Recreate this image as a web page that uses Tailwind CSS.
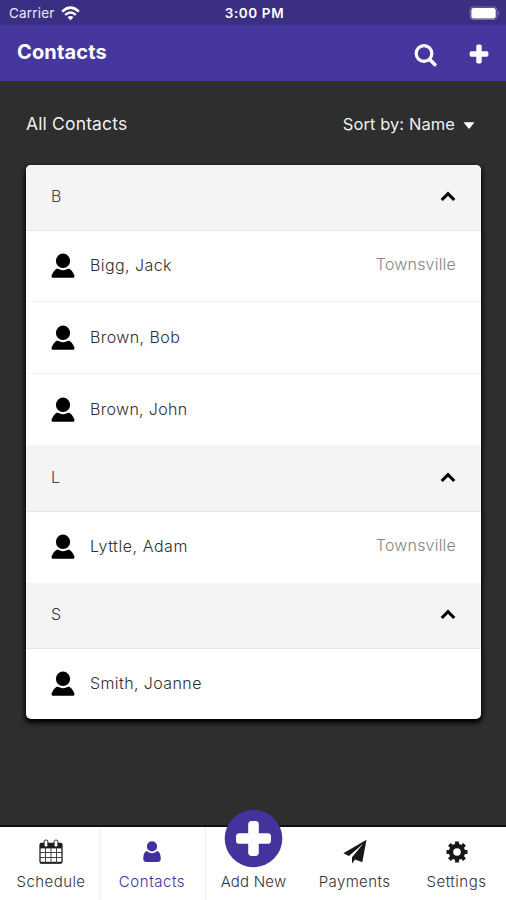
<!DOCTYPE html>
<html lang="en">
<head>
<meta charset="utf-8">
<title>Contacts</title>
<script src="https://cdn.jsdelivr.net/npm/@tailwindcss/browser@4"></script>
</head>
<body class="bg-[#2e2e2e]">
<svg class="hidden">
  <symbol id="person" viewBox="0 0 24 26"><ellipse cx="12" cy="7.8" rx="7.1" ry="7.2"/><path d="M5.5 15.8Q7.5 15.4 8.7 16.4Q12 18 15.3 16.4Q16.5 15.4 18.5 15.8Q22 18 23.4 22.2Q23.8 24.8 21.5 24.8H2.5Q.2 24.8 .6 22.2Q2 18 5.5 15.8Z"/></symbol>
  <symbol id="chevron" viewBox="0 0 16 11"><path d="M1.7 9 8 2.7 14.3 9" fill="none" stroke="currentColor" stroke-width="3.1"/></symbol>
</svg>
<div class="flex h-[900px] w-[506px] flex-col overflow-hidden font-['Inter','Liberation_Sans',sans-serif]">
  <div class="grid h-[25px] shrink-0 grid-cols-3 items-center bg-[#3a2f82] pr-[6px] pl-[9px] text-white">
    <div class="flex items-center gap-[6px]">
      <span class="pt-px text-[13.5px] leading-[25px] tracking-[.2px] text-white/90">Carrier</span>
      <svg class="h-[15px] w-[19px]" viewBox="0 0 19 15" fill="none" stroke="currentColor" stroke-width="2.5"><path d="M1.1 5.6Q9.5-2.3 17.9 5.6M4.2 8.9Q9.5 4.2 14.8 8.9"/><path d="M6.5 11.2Q9.5 8.8 12.5 11.2L9.5 14.3Z" fill="currentColor" stroke="none"/></svg>
    </div>
    <span class="-mr-px -ml-px pt-px text-center text-[13.5px] font-semibold leading-[25px] tracking-[.6px]">3:00 PM</span>
    <svg class="h-[14px] w-[31px] justify-self-end" viewBox="0 0 31 14"><rect x="1" y="1" width="27" height="12.5" rx="3" fill="none" stroke="#7a71ab"/><rect x="2.3" y="2" width="24.4" height="10.5" rx="2" fill="#fff"/><path d="M29 5q2 2.2 0 4.5z" fill="#8c84ba"/></svg>
  </div>
  <header class="flex h-[56px] shrink-0 items-center justify-between bg-[#45379d] pr-[17px] pl-[17px] text-white">
    <h1 class="pb-[2px] text-[20px] font-bold leading-6 tracking-[.15px]">Contacts</h1>
    <div class="flex items-center gap-[32px] pt-[2px]">
      <svg class="mt-[2px] h-[23px] w-[23px]" viewBox="0 0 23 23" fill="none" stroke="currentColor" stroke-linecap="round"><circle cx="10" cy="9.5" r="7.8" stroke-width="3.2"/><path d="M16 15.8 20.8 20.5" stroke-width="3.7"/></svg>
      <svg class="h-5 w-5" viewBox="0 0 20 20" fill="currentColor"><rect x="7.3" y=".6" width="5.4" height="18.8" rx="1.6"/><rect x=".6" y="7.3" width="18.8" height="5.4" rx="1.6"/></svg>
    </div>
  </header>
  <main class="flex flex-1 flex-col px-[26px]">
    <div class="flex h-[84px] items-center justify-between pt-[2px] pr-[5px] text-white">
      <h2 class="text-[17.5px] tracking-[.15px] text-white/95">All Contacts</h2>
      <div class="flex items-center gap-[8px]"><span class="text-[16.5px] tracking-[.08px] text-white/95">Sort by: Name</span><svg class="mt-[2px] h-[7px] w-[12px]" viewBox="0 0 12 7" fill="currentColor"><path d="M.5.3h11L6.5 6.5q-.5.5-1 0z"/></svg></div>
    </div>
    <section class="mr-[-1px] h-[554px] overflow-hidden rounded-[5px] bg-white text-[16px] text-[#303030] shadow-[0_3px_5px_1px_#000]">
      <div class="flex h-[66px] items-center justify-between border-b border-[#e4e4e4] bg-[#f4f4f4] pr-[25px] pl-[25px] font-light"><span class="pb-[3px] text-[#444]">B</span><svg class="mb-[3px] h-[11px] w-[16px] text-black"><use href="#chevron"/></svg></div>
      <div class="flex h-[71px] items-center border-b border-[#f2f2f2] pr-[25px] pl-[25px] font-light"><svg class="h-[26px] w-[24px]"><use href="#person"/></svg><span class="ml-[15px] flex-1 pb-[2px] tracking-[.42px]">Bigg, Jack</span><span class="pb-[5px] tracking-[.2px] text-[#858585]">Townsville</span></div>
      <div class="flex h-[72px] items-center border-b border-[#f2f2f2] pr-[25px] pl-[25px] font-light"><svg class="h-[26px] w-[24px]"><use href="#person"/></svg><span class="ml-[15px] flex-1 pb-[2px] tracking-[.42px]">Brown, Bob</span></div>
      <div class="flex h-[71px] items-center pr-[25px] pl-[25px] font-light"><svg class="h-[26px] w-[24px]"><use href="#person"/></svg><span class="ml-[15px] flex-1 pb-[1px] tracking-[.32px]">Brown, John</span></div>
      <div class="flex h-[67px] items-center justify-between border-b border-[#e4e4e4] bg-[#f4f4f4] pr-[25px] pl-[25px] font-light"><span class="pb-[2px] text-[#444]">L</span><svg class="mb-[2px] h-[11px] w-[16px] text-black"><use href="#chevron"/></svg></div>
      <div class="flex h-[71px] items-center pr-[25px] pl-[25px] font-light"><svg class="mb-px h-[26px] w-[24px]"><use href="#person"/></svg><span class="ml-[15px] flex-1 pb-[3px] tracking-[.55px]">Lyttle, Adam</span><span class="pb-[5px] tracking-[.2px] text-[#858585]">Townsville</span></div>
      <div class="flex h-[66px] items-center justify-between border-b border-[#e4e4e4] bg-[#f4f4f4] pr-[25px] pl-[25px] font-light"><span class="pb-[3px] text-[#333]">S</span><svg class="mb-[2px] h-[11px] w-[16px] text-black"><use href="#chevron"/></svg></div>
      <div class="flex h-[70px] items-center pr-[25px] pl-[25px] font-light"><svg class="h-[26px] w-[24px]"><use href="#person"/></svg><span class="ml-[15px] flex-1 pb-[2px] tracking-[.4px]">Smith, Joanne</span></div>
    </section>
  </main>
  <nav class="relative grid h-[75px] shrink-0 grid-cols-[99px_108px_93px_103px_103px] border-t-2 border-[#111] bg-white text-[15px] font-light text-[#333]">
    <a class="flex flex-col items-center pt-[12px] pl-[3px]"><svg class="h-[25px] w-[24px]" viewBox="0 0 24 25"><rect x="1" y="4.5" width="22" height="19.5" rx="1.4" fill="#fff" stroke="#222" stroke-width="1.3"/><path d="M1 4h22v5.4H1z" fill="#1d1d1d"/><path d="M1 23.6H23" stroke="#1d1d1d" stroke-width="1.6"/><path d="M1 13.5H23M1 18.5H23M6.5 9V24M12 9V24M17.5 9V24" stroke="#444"/><rect x="5.1" y="1" width="3.8" height="7" rx="1.7" fill="#fff" stroke="#222"/><rect x="15.1" y="1" width="3.8" height="7" rx="1.7" fill="#fff" stroke="#222"/></svg><span class="mt-[8px] leading-[20px] tracking-[.45px]">Schedule</span></a>
    <a class="flex flex-col items-center border-x-[3px] border-[#f7f7f7] pt-[13px] pr-[2px] text-[#4030a0]"><svg class="h-6 w-5" viewBox="0 0 20 24" fill="currentColor"><circle cx="10" cy="6.4" r="5.1"/><path d="M5 10.9Q10 15.6 15 10.9Q18.7 11.7 18.7 18.7Q18.7 22 15.5 22H4.5Q1.3 22 1.3 18.7Q1.3 11.7 5 10.9Z"/></svg><span class="mt-[8px] leading-[20px] tracking-[.55px]">Contacts</span></a>
    <a class="flex flex-col items-center pt-[45px]"><svg class="absolute top-[-19px] left-[224px] h-[60px] w-[60px]" viewBox="0 0 60 60"><circle cx="29.5" cy="30.5" r="28.8" fill="#43349d"/><rect x="24.2" y="13" width="10.6" height="35" rx="3.4" fill="#fff"/><rect x="12" y="25.2" width="35" height="10.6" rx="3.4" fill="#fff"/></svg><span class="leading-[20px] tracking-[.2px]">Add New</span></a>
    <a class="flex flex-col items-center pt-[12px] pl-[6px]"><svg class="h-[25px] w-[24px]" viewBox="0 0 24 25" fill="#181818"><path d="M23.5.8.4 14.2 5.9 16.9 20.2 4.8 9 18.2V24.4L12.2 20.5 19.3 23.2Z"/></svg><span class="mt-[8px] leading-[20px] tracking-[.4px]">Payments</span></a>
    <a class="flex flex-col items-center pt-[14px] pl-[4px]"><svg class="h-[22px] w-[22px]" viewBox="0 0 22 22"><circle cx="11" cy="11" r="6" fill="none" stroke="#181818" stroke-width="4.4"/><path d="M11 .5V4M11 18V21.5M.5 11H4M18 11H21.5M3.4 3.4 6 6M16 16 18.6 18.6M18.6 3.4 16 6M6 16 3.4 18.6" stroke="#181818" stroke-width="3.9"/></svg><span class="mt-[9px] leading-[20px] tracking-[.5px]">Settings</span></a>
  </nav>
</div>
</body>
</html>
